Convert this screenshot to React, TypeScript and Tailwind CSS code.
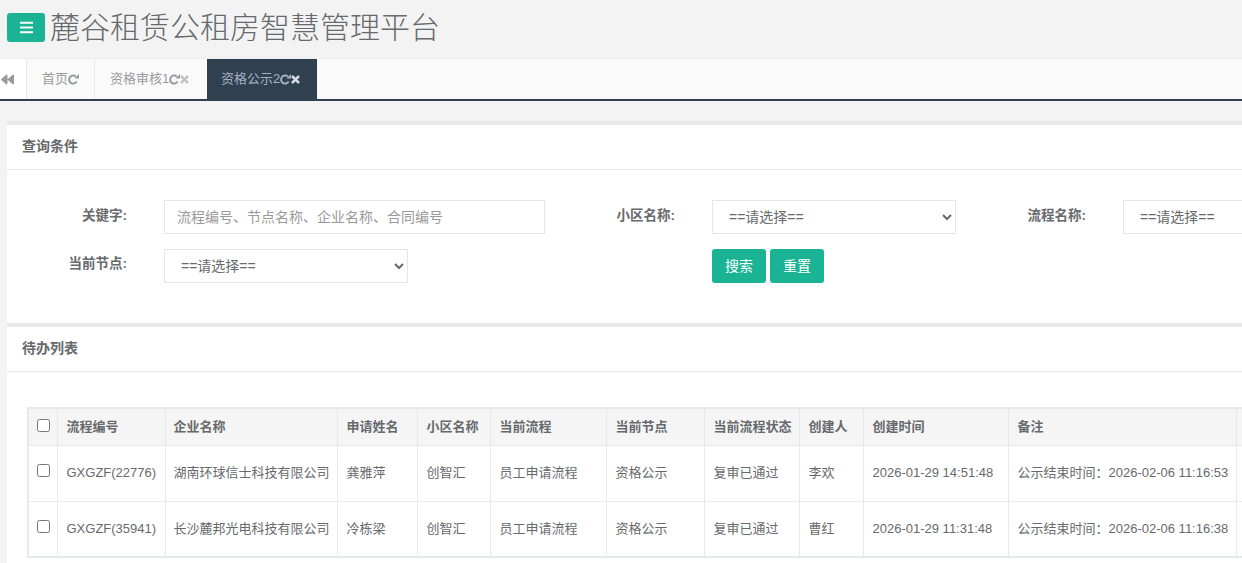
import React from "react";
import { FaBackward, FaBars } from "react-icons/fa";

const FONT = { fontFamily: '"Liberation Sans", "Noto Sans CJK SC", sans-serif' };

const columns = [
  "w-[29px]", "w-[108px]", "w-[172px]", "w-[80px]", "w-[73px]", "w-[116px]",
  "w-[98px]", "w-[95px]", "w-[64px]", "w-[145px]", "w-[228px]", "w-[40px]",
];

const heads = ["流程编号", "企业名称", "申请姓名", "小区名称", "当前流程", "当前节点", "当前流程状态", "创建人", "创建时间", "备注", ""];

const rows = [
  ["GXGZF(22776)", "湖南环球信士科技有限公司", "龚雅萍", "创智汇", "员工申请流程", "资格公示", "复审已通过", "李欢", "2026-01-29 14:51:48", "公示结束时间：2026-02-06 11:16:53", ""],
  ["GXGZF(35941)", "长沙麓邦光电科技有限公司", "冷栋梁", "创智汇", "员工申请流程", "资格公示", "复审已通过", "曹红", "2026-01-29 11:31:48", "公示结束时间：2026-02-06 11:16:38", ""],
];

function Repeat() {
  return (
    <svg viewBox="0 0 11 11" className="w-[11px] h-[11px] shrink-0">
      <path d="M8.6 7.6A4 4 0 1 1 7.8 2.6" fill="none" stroke="currentColor" strokeWidth="2" />
      <path d="M6.4 4.6H11V0Z" fill="currentColor" />
    </svg>
  );
}

function Close({ className }: { className?: string }) {
  return (
    <svg viewBox="0 0 9 9" className={`w-[9px] h-[9px] shrink-0 ${className ?? ""}`}>
      <path d="M1 1L8 8M8 1L1 8" fill="none" stroke="currentColor" strokeWidth="2.5" />
    </svg>
  );
}

function Box() {
  return <input type="checkbox" className="block w-[13px] h-[13px] m-0 appearance-auto" />;
}

function Sel({ w }: { w: string }) {
  return (
    <select className={`${w} h-[34px] shrink-0 bg-white border border-[#e5e6e7] pl-3 text-[14px] text-[#676a6c] appearance-auto outline-none`}>
      <option>==请选择==</option>
    </select>
  );
}

function Label({ w, children, className }: { w: string; children: React.ReactNode; className?: string }) {
  return <label className={`${w} ${className ?? ""} shrink-0 text-right font-bold text-[13.5px] leading-[30px] self-start`}>{children}</label>;
}

export default function App() {
  return (
    <div style={FONT} className="w-[1242px] h-[563px] overflow-hidden bg-[#f3f3f4] text-[13px] text-[#676a6c]">
      <header className="h-[58px] flex items-start pl-[7px] pt-[13px]">
        <button className="w-[38px] h-[29px] rounded-[3px] bg-[#1ab394] text-white flex items-center justify-center">
          <FaBars className="text-[15px]" />
        </button>
        <h1 className="ml-[5px] -mt-[7px] text-[30px] leading-[44px] font-light whitespace-nowrap text-[#676a6c]">麓谷租赁公租房智慧管理平台</h1>
      </header>

      <nav className="h-[43px] bg-[#fafafa] border-b-2 border-[#2f4050] border-t border-t-[#eeeeee] flex text-[13px] text-[#999c9e]">
        <div className="w-[27px] bg-white border-r border-[#e7eaec] flex items-center pl-[1px] text-[#999c9e]">
          <FaBackward className="text-[13px]" />
        </div>
        <div className="w-[68px] border-r border-[#e7eaec] flex items-center pl-[15px]">
          <span>首页</span><Repeat />
        </div>
        <div className="w-[112px] flex items-center pl-[15px]">
          <span className="whitespace-nowrap">资格审核1</span><Repeat /><Close className="text-[#c4c4c4]" />
        </div>
        <div className="w-[110px] bg-[#2f4050] text-[#a7b1c2] flex items-center pl-[14px]">
          <span className="whitespace-nowrap">资格公示2</span><Repeat /><Close className="text-[#d5dae2]" />
        </div>
      </nav>

      <main className="pl-[7px] pt-[20px]">
        <section className="bg-white h-[202px] border-t-4 border-[#e7eaec]">
          <div className="h-[45px] border-b border-[#e7eaec] pl-[15px] pb-[2px] flex items-center font-bold text-[14px]">查询条件</div>
          <div className="pt-[30px] pl-[10px] flex flex-col gap-[15px]">
            <div className="flex items-start h-[34px]">
              <Label w="w-[110px]" className="mt-[1px]">关键字:</Label>
              <input
                placeholder="流程编号、节点名称、企业名称、合同编号"
                className="ml-[37px] w-[381px] h-[34px] shrink-0 border border-[#e5e6e7] px-3 text-[14px] placeholder:text-[#9a9a9a] outline-none"
              />
              <Label w="w-[130px]" className="mt-[1px]">小区名称:</Label>
              <span className="w-[37px] shrink-0" />
              <Sel w="w-[244px]" />
              <Label w="w-[130px]" className="mt-[1px]">流程名称:</Label>
              <span className="w-[37px] shrink-0" />
              <Sel w="w-[244px]" />
            </div>
            <div className="flex items-start h-[34px]">
              <Label w="w-[110px]">当前节点:</Label>
              <span className="w-[37px] shrink-0" />
              <Sel w="w-[244px]" />
              <div className="ml-[304px] flex gap-[4px]">
                <button className="w-[54px] h-[34px] rounded-[3px] bg-[#1ab394] text-white text-[14px]">搜索</button>
                <button className="w-[54px] h-[34px] rounded-[3px] bg-[#1ab394] text-white text-[14px]">重置</button>
              </div>
            </div>
          </div>
        </section>

        <section className="bg-white h-[300px] border-t-4 border-[#e7eaec]">
          <div className="h-[45px] border-b border-[#e7eaec] pl-[15px] pb-[2px] flex items-center font-bold text-[14px]">待办列表</div>
          <div className="pl-[20px] pt-[35px]">
            <table className="table-fixed border-collapse w-[1249px] border-2 border-[#e7eaec]">
              <colgroup>
                {columns.map((c, i) => <col key={i} className={c} />)}
              </colgroup>
              <thead>
                <tr className="h-[37px] bg-[#f5f5f6]">
                  <th className="border border-[#e7eaec] pl-[8px] pb-[3px] text-left"><Box /></th>
                  {heads.map((h, i) => (
                    <th key={i} className={`border border-[#e7eaec] ${i === 1 ? "pl-[8px]" : "pl-[9px]"} text-left font-bold whitespace-nowrap`}>{h}</th>
                  ))}
                </tr>
              </thead>
              <tbody>
                {rows.map((r, i) => (
                  <tr key={i} className="h-[56px]">
                    <td className="border border-[#e7eaec] pl-[8px] pb-[5px]"><Box /></td>
                    {r.map((c, j) => (
                      <td key={j} className={`border border-[#e7eaec] ${j === 1 ? "pl-[8px]" : "pl-[9px]"} pb-[1px] whitespace-nowrap`}>{c}</td>
                    ))}
                  </tr>
                ))}
              </tbody>
            </table>
          </div>
        </section>
      </main>
    </div>
  );
}
